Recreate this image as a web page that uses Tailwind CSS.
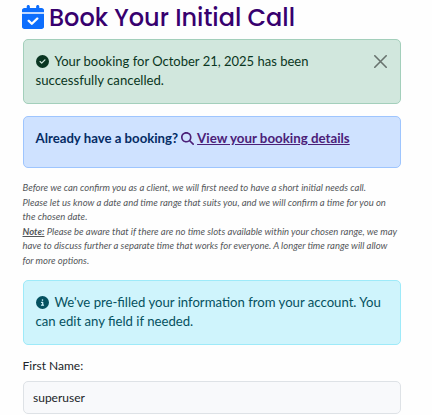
<!DOCTYPE html>
<html lang="en">
<head>
<meta charset="utf-8">
<title>Book Your Initial Call</title>
<script src="https://cdn.jsdelivr.net/npm/@tailwindcss/browser@4"></script>
</head>
<body class="h-[415px] overflow-hidden bg-[#fefefe] font-['Lato',sans-serif] text-[13px] leading-[19.2px] text-[#212529]">
<main class="flex w-[432px] flex-col pl-[23px] pr-[31px]">
  <h1 class="flex h-[39px] items-start gap-[5px] whitespace-nowrap font-['Poppins','Inter',sans-serif] text-[24px] font-medium leading-[35px] text-[#37006e]">
    <svg class="-ml-[1px] mt-[5px] h-[24px] w-[22px] shrink-0" viewBox="0 0 448 512" preserveAspectRatio="none" fill="#0d6efd"><path d="M128 0c17.700 0 32 14.300 32 32v32h128V32c0-17.700 14.300-32 32-32s32 14.300 32 32v32h48c26.500 0 48 21.500 48 48v44H0v-44c0-26.500 21.500-48 48-48h48V32c0-17.700 14.300-32 32-32zM0 188h448v276c0 26.500-21.500 48-48 48H48c-26.500 0-48-21.500-48-48V188zm329 117c9.400-9.400 9.400-24.600 0-33.900s-24.600-9.400-33.900 0l-95 95-47-47c-9.400-9.400-24.600-9.400-33.900 0s-9.400 24.600 0 33.900l64 64c9.400 9.400 24.600 9.400 33.900 0l112-112z"/></svg>
    <span>Book Your Initial Call</span>
  </h1>
  <div class="flex h-[65px] justify-between rounded-[5px] border border-[#a3cfbb] bg-[#d1e7dd] pl-[11.500px] pr-3 pt-3 text-[#0a3622]">
    <p class="whitespace-nowrap"><svg class="mr-[6px] inline-block size-[13px] align-[-2px]" viewBox="0 0 512 512" fill="#0a3622"><path d="M256 512a256 256 0 1 0 0-512 256 256 0 1 0 0 512zm113-303L241 337c-9.400 9.400-24.600 9.400-33.900 0l-64-64c-9.400-9.400-9.400-24.600 0-33.900s24.600-9.400 33.900 0l47 47L335 175c9.400-9.400 24.600-9.400 33.900 0s9.400 24.600 0 33.900z"/></svg>Your booking for October 21, 2025 has been<br><span class="text-[13.150px]">successfully cancelled.</span></p>
    <button class="mr-[1px] mt-[3px] size-[13px]" aria-label="Close"><svg class="size-[13px]" viewBox="0 0 13 13" fill="none" stroke="#68736e" stroke-width="1.600" stroke-linecap="round"><path d="M.8.8l11.400 11.400M12.200.8L.8 12.200"/></svg></button>
  </div>
  <div class="mt-3 h-[52px] rounded-[5px] border border-[#9ec5fe] bg-[#cfe2ff] pl-[11.500px] pt-3 text-[13.200px] font-bold text-[#052c65]">
    <p class="whitespace-nowrap">Already have a booking?<svg class="ml-[3px] mr-[3px] inline-block size-[13px] align-[-2px]" viewBox="0 0 512 512" fill="#4b2078"><path d="M416 208c0 45.900-14.900 88.300-40 122.700l126.600 126.700c12.500 12.500 12.500 32.800 0 45.300s-32.800 12.500-45.300 0L330.700 376c-34.400 25.200-76.800 40-122.700 40C93.100 416 0 322.900 0 208S93.100 0 208 0s208 93.100 208 208zM208 352a144 144 0 1 0 0-288 144 144 0 1 0 0 288z"/></svg><a class="text-[13.300px] text-[#4b2078] underline" href="#">View your booking details</a></p>
  </div>
  <p class="-ml-[0.500px] mt-[13px] h-[87px] whitespace-nowrap text-[9.490px] italic leading-[14.600px] text-[#54575a]">Before we can confirm you as a client, we will first need to have a short initial needs call.<br>Please let us know a date and time range that suits you, and we will confirm a time for you on<br>the chosen date.<br><b class="underline">Note:</b> Please be aware that if there are no time slots available within your chosen range, we may<br>have to discuss further a separate time that works for everyone. A longer time range will allow<br>for more options.</p>
  <div class="mt-3 h-[65px] rounded-[5px] border border-[#9eeaf9] bg-[#cff4fc] pl-[11.500px] pt-3 text-[13.150px] text-[#055160]">
    <p class="whitespace-nowrap"><svg class="mr-[6px] inline-block size-[13px] align-[-2px]" viewBox="0 0 512 512" fill="#055160"><path d="M256 512a256 256 0 1 0 0-512 256 256 0 1 0 0 512zm-40-176h24v-64h-24c-13.300 0-24-10.700-24-24s10.700-24 24-24h48c13.300 0 24 10.700 24 24v88h8c13.300 0 24 10.700 24 24s-10.700 24-24 24h-80c-13.300 0-24-10.700-24-24s10.700-24 24-24zm40-208a32 32 0 1 1 0 64 32 32 0 1 1 0-64z"/></svg>We've pre-filled your information from your account. You<br>can edit any field if needed.</p>
  </div>
  <label class="-ml-[0.500px] mt-[11px] h-[25px] text-[12px]" for="first">First Name:</label>
  <input id="first" class="h-[33px] rounded-[5px] border border-[#dee2e6] bg-[#f8f9fb] px-[9px] text-[12px] text-[#212529]" value="superuser">
</main>
</body>
</html>
